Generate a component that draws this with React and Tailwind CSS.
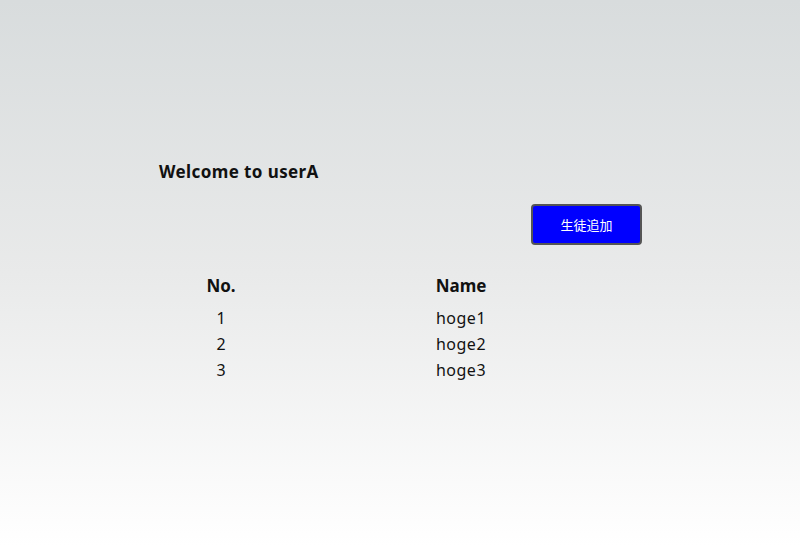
const students = [
  { no: 1, name: 'hoge1' },
  { no: 2, name: 'hoge2' },
  { no: 3, name: 'hoge3' },
];

const App = () => {
  return (
    <div
      className="h-[547px] w-[800px] bg-gradient-to-b from-[#d8dcdd] via-[#e9eaea] to-[#ffffff] text-[#111] font-['Noto_Sans','Noto_Sans_CJK_JP',sans-serif]"
    >
      <div className="ml-[159px] w-[483px] pt-[160px]">
        <h1 className="text-[17px] font-bold leading-[24px] tracking-[0.4px]">Welcome to userA</h1>

        <div className="mt-[20px] flex justify-end">
          <button className="h-[41px] w-[111px] rounded-[4px] border-2 border-[#555] bg-[#0000ff] text-[13px] text-white font-['Noto_Sans_CJK_JP',sans-serif]">
            生徒追加
          </button>
        </div>

        <table className="mt-[27px] border-collapse">
          <thead>
            <tr>
              <th className="w-[124px] pb-[5px] text-center text-[17px] font-bold leading-[28px]">No.</th>
              <th className="w-[356px] pb-[5px] text-center text-[17px] font-bold leading-[28px]">Name</th>
            </tr>
          </thead>
          <tbody>
            {students.map((s) => (
              <tr key={s.no}>
                <td className="text-center text-[16px] leading-[26px]">{s.no}</td>
                <td className="text-center text-[16px] leading-[26px] tracking-[0.5px]">{s.name}</td>
              </tr>
            ))}
          </tbody>
        </table>
      </div>
    </div>
  );
};

export default App;
